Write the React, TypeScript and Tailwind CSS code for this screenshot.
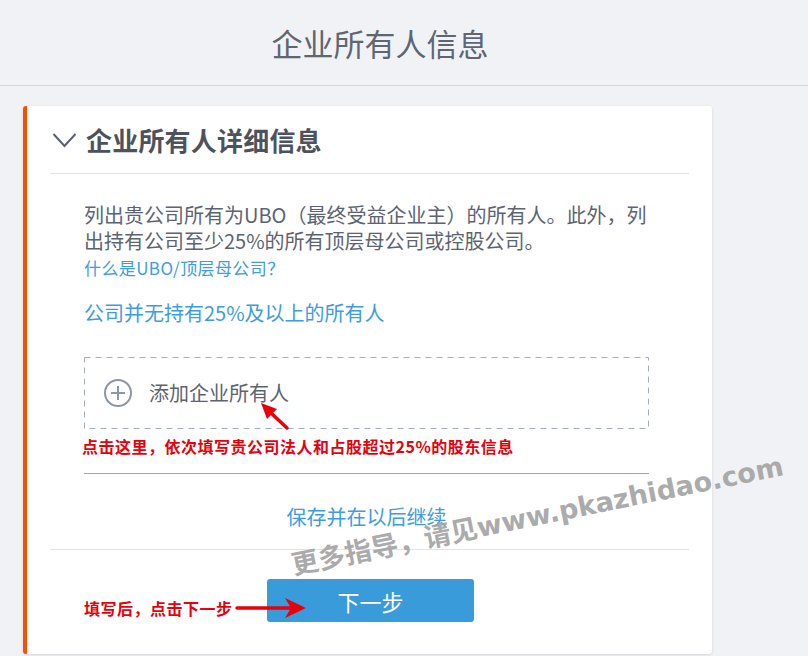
import React from "react";

const cjk = { fontFamily: '"Noto Sans CJK SC", "Noto Sans", sans-serif' };

export default function App() {
  return (
    <div
      className="relative w-[808px] h-[656px] overflow-hidden bg-[#f1f2f6]"
      style={cjk}
    >
      {/* Page header */}
      <div className="h-[86px] border-b border-[#d3d6de] flex items-center w-[808px]">
        <div className="w-[760px] flex justify-center">
          <h1 className="text-[31px] leading-[40px] text-[#5f6673] font-normal">
            企业所有人信息
          </h1>
        </div>
      </div>

      {/* Card */}
      <div className="ml-[23px] mt-[20px] w-[689px] bg-white border-l-4 border-[#ff4e00] rounded-[3px] shadow-[0_1px_3px_rgba(0,0,0,0.12)]">
        {/* Card header */}
        <div className="mx-[23px] h-[68px] border-b border-[#dfe3ea] flex items-center">
          <svg width="26" height="18" viewBox="0 0 26 18" className="ml-[2px]">
            <path d="M1.5 3 L12.5 15 L23.5 3" fill="none" stroke="#5a6070" strokeWidth="2" />
          </svg>
          <h2 className="ml-[8px] text-[26px] leading-[34px] font-bold text-[#4d525c] tracking-[0.2px]">
            企业所有人详细信息
          </h2>
        </div>

        {/* Body */}
        <div className="pl-[57px] pr-[63px]">
          <p className="mt-[28px] text-[20px] leading-[26px] text-[#5c6473] whitespace-nowrap">
            列出贵公司所有为UBO（最终受益企业主）的所有人。此外，列
            <br />
            出持有公司至少25%的所有顶层母公司或控股公司。
          </p>
          <div className="mt-[2px] text-[17px] leading-[24px] text-[#3d9ce3] tracking-[0.4px]">
            什么是UBO/顶层母公司？
          </div>
          <div className="mt-[20px] text-[20px] leading-[26px] text-[#3d9ce3]">
            公司并无持有25%及以上的所有人
          </div>

          <div className="relative mt-[31px] h-[72px] flex items-center pl-[19px]">
            <svg
              className="absolute left-0 top-0"
              width="565"
              height="72"
              viewBox="0 0 565 72"
            >
              <rect
                x="0.5"
                y="0.5"
                width="564"
                height="71"
                fill="none"
                stroke="#a3adc1"
                strokeWidth="1"
                strokeDasharray="6 5"
              />
            </svg>
            <svg width="30" height="30" viewBox="0 0 30 30">
              <circle cx="15" cy="15" r="13" fill="none" stroke="#8d96a8" strokeWidth="2" />
              <path d="M15 8 V22 M8 15 H22" stroke="#8d96a8" strokeWidth="2" />
            </svg>
            <span className="ml-[16px] text-[20px] leading-[26px] text-[#5c6473]">
              添加企业所有人
            </span>
          </div>

          <div className="mt-[7px] -ml-[2px] text-[16px] leading-[20px] font-bold text-[#e8000b] whitespace-nowrap tracking-[0.5px]">
            点击这里，依次填写贵公司法人和占股超过25%的股东信息
          </div>

          <div className="mt-[17px] h-px bg-[#9ea7b8]" />

          <div className="mt-[30px] text-center text-[20px] leading-[26px] text-[#3d9ce3]">
            保存并在以后继续
          </div>
        </div>

        <div className="mx-[23px] mt-[19px] h-px bg-[#dfe3ea]" />

        <div className="flex justify-center pt-[29px] pb-[32px]">
          <button className="ml-[2px] w-[207px] h-[43px] rounded-[3px] bg-[#3a9bdb] text-white text-[22px] leading-[30px]">
            下一步
          </button>
        </div>
      </div>

      {/* Annotation arrows */}
      <svg
        className="absolute left-0 top-0 pointer-events-none"
        width="808"
        height="656"
        viewBox="0 0 808 656"
      >
        <line x1="287" y1="428" x2="271" y2="413" stroke="#e8000b" strokeWidth="3.5" strokeLinecap="round" />
        <polygon points="261,403 277,409 267,419" fill="#e8000b" />
        <line x1="237" y1="608" x2="292" y2="608" stroke="#e8000b" strokeWidth="3.5" strokeLinecap="round" />
        <polygon points="306,608 285,598 291,608 285,618" fill="#e8000b" />
      </svg>

      {/* Annotation: text near button */}
      <div className="absolute left-[84px] top-[598px] text-[16px] leading-[20px] font-bold text-[#e8000b] whitespace-nowrap tracking-[0.5px]">
        填写后，点击下一步
      </div>

      {/* Watermark */}
      <div
        className="absolute left-[292px] top-[551px] origin-left -rotate-[11.5deg] whitespace-nowrap text-[27px] leading-[30px] font-bold text-[#a3a3a3] opacity-90 pointer-events-none"
        style={{ fontFamily: '"DejaVu Sans", "Noto Sans CJK SC", sans-serif' }}
      >
        更多指导，请见www.pkazhidao.com
      </div>
    </div>
  );
}
